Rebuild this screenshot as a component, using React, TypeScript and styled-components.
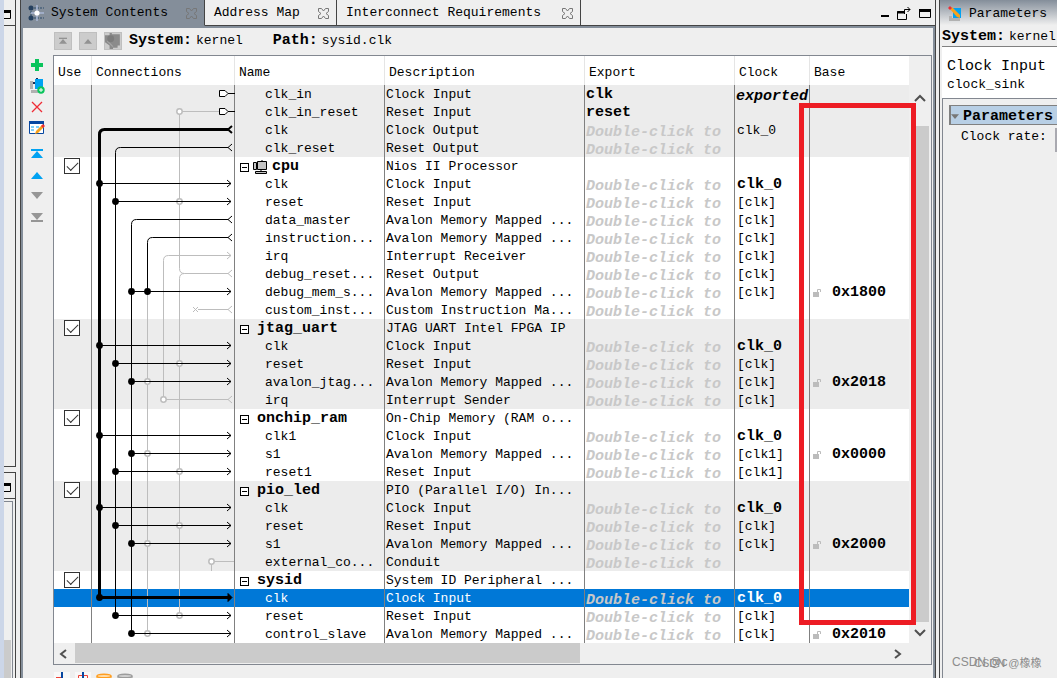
import React from "react";
import styled, { createGlobalStyle } from "styled-components";

const C = {
  panel: "#efefef",
  slate: "#848e9a",
  line: "#444444",
  frame: "#828790",
  band: "#ececec",
  select: "#0078d7",
  thumb: "#cbcbcb",
  faint: "#bdbdbd",
  divider: "#808080",
};
const ROW = 18;

const Global = createGlobalStyle`
  * { box-sizing: border-box; }
  html, body, #root { height: 100%; }
  body {
    margin: 0;
    overflow: hidden;
    background: ${C.panel};
    color: #000;
    font: 13px/18px "Liberation Mono", "Noto Sans CJK SC", monospace;
  }
  button {
    display: inline-flex;
    align-items: center;
    justify-content: center;
    padding: 0;
    border: 0;
    background: none;
    color: inherit;
    font: inherit;
    white-space: pre;
  }
  svg { display: block; flex: none; }
`;

const Workspace = styled.div`
  display: flex;
  height: 100vh;
  overflow: hidden;
`;

/* ---- neighbouring dock, mostly off screen ---- */
const SideDock = styled.aside`
  flex: 0 0 16px;
  min-width: 0;
  overflow: hidden;
  display: flex;
  flex-direction: column;
  gap: 5px;
  border-left: 4px solid #ccd6e8;
`;
const SidePane = styled.section<{ $grow?: boolean }>`
  flex: ${(p) => (p.$grow ? "1 1 0" : "0 0 467px")};
  min-width: 0;
  display: flex;
  flex-direction: column;
  border: solid ${C.line};
  border-width: ${(p) => (p.$grow ? "1px 1px 0 0" : "0 1px 1px 0")};
`;
const SideTitle = styled.div`
  display: flex;
  justify-content: flex-end;
  height: 26px;
  padding: 10px 4px 0 0;
  overflow: hidden;
  border-bottom: 1px solid ${C.line};
`;
const SideScroll = styled.div`
  flex: 1;
  display: flex;
  align-items: flex-end;
  margin: 2px 2px 0 0;
  border: solid ${C.frame};
  border-width: 1px 1px 0 0;
`;
const SideThumb = styled.div`
  width: 7px;
  height: 38px;
  background: ${C.thumb};
`;

/* ---- main dock ---- */
const MainDock = styled.main`
  flex: 1;
  min-width: 0;
  display: flex;
  flex-direction: column;
  margin: 0 3px 0 4px;
  border: solid ${C.line};
  border-width: 0 1px;
`;
const TabBar = styled.header`
  display: flex;
  height: 26px;
  flex: none;
`;
const Tab = styled.div<{ $active?: boolean }>`
  display: flex;
  align-items: center;
  justify-content: space-between;
  padding: 1px 7px 0 9px;
  border-right: 1px solid ${C.line};
  border-bottom: 1px solid ${(p) => (p.$active ? C.slate : C.line)};
  background: ${(p) => (p.$active ? C.slate : C.panel)};
`;
const FirstTab = styled(Tab)`
  width: 184px;
  padding-left: 7px;
`;
const MapTab = styled(Tab)`
  width: 132px;
`;
const RequirementsTab = styled(Tab)`
  width: 244px;
`;
const TabLabel = styled.button`
  gap: 6px;
`;
const WindowTools = styled.div`
  flex: 1;
  display: flex;
  justify-content: flex-end;
  align-items: center;
  gap: 7px;
  padding: 3px 4px 0 0;
  border-bottom: 1px solid ${C.line};
`;
const MainBody = styled.div`
  flex: 1;
  min-height: 0;
  display: flex;
  border: solid ${C.slate};
  border-width: 2px 2px 0;
`;
const SideTools = styled.nav`
  flex: 0 0 30px;
  display: flex;
  flex-direction: column;
  align-items: center;
  padding: 26px 2px 0 0;
`;
const ToolButton = styled.button`
  width: 20px;
  height: 21px;
`;
const ToolGap = styled.hr`
  width: 20px;
  height: 5px;
  margin: 0;
  border: 0;
`;
const Content = styled.div`
  flex: 1;
  min-width: 0;
  display: flex;
  flex-direction: column;
`;
const PathBar = styled.div`
  display: flex;
  align-items: center;
  height: 27px;
  padding: 0 0 2px 1px;
  flex: none;
`;
const NavButton = styled.button`
  width: 18px;
  height: 18px;
  margin-right: 7px;
  border: 1px solid #bfbfbf;
  background: #cccccc;
`;
const Strong = styled.b`
  font-size: 15px;
`;
const PathValue = styled.span`
  margin: 0 30px 0 4px;
`;

const TableFrame = styled.div`
  display: flex;
  flex-direction: column;
  flex: none;
  margin-right: 1px;
  border: 1px solid ${C.frame};
`;
const TableArea = styled.div`
  display: flex;
  position: relative;
`;
const GridHolder = styled.div`
  flex: 1;
  min-width: 0;
  position: relative;
  background: #fff;
`;
const Grid = styled.table`
  width: 100%;
  table-layout: fixed;
  border-collapse: separate;
  border-spacing: 0;
`;
const Head = styled.th`
  height: 29px;
  padding: 4px 4px 0;
  text-align: left;
  font-weight: 400;
  border-right: 1px solid #e5e5e5;
  &:last-child { border-right-color: transparent; }
`;
const Row = styled.tr<{ $band?: boolean; $selected?: boolean }>`
  height: ${ROW}px;
  background: ${(p) => (p.$selected ? C.select : p.$band ? C.band : "#fff")};
  color: ${(p) => (p.$selected ? "#fff" : "#000")};
`;
const Cell = styled.td`
  height: ${ROW}px;
  padding: 0 0 0 1px;
  border-right: 1px solid ${C.divider};
  white-space: pre;
  &:last-child { border-right: 0; }
`;
const CellLine = styled.div<{ $indent?: number; $gap?: number }>`
  display: flex;
  align-items: center;
  gap: ${(p) => p.$gap ?? 0}px;
  height: ${ROW}px;
  padding: 2px 0 0 ${(p) => p.$indent ?? 0}px;
  line-height: 16px;
`;
const Bold = styled.b`
  font-size: 15px;
`;
const Hint = styled.i<{ $dim?: boolean }>`
  display: block;
  height: ${ROW}px;
  padding-top: 4px;
  font-size: 15px;
  line-height: 16px;
  font-weight: 700;
  color: ${(p) => (p.$dim ? "#c8c8c8" : "inherit")};
`;
const Tick = styled.input`
  appearance: none;
  display: block;
  width: 16px;
  height: 16px;
  margin: 0 0 0 9px;
  border: 1px solid #333;
  background: #fff;
  &:checked::after {
    content: "";
    display: block;
    width: 10px;
    height: 5px;
    margin: 3px 0 0 2px;
    border: solid #333;
    border-width: 0 0 1px 1px;
    transform: rotate(-45deg);
  }
`;
const Expander = styled.button`
  width: 9px;
  height: 9px;
  border: 1px solid #000;
  background: #fff;
  &::after {
    content: "";
    width: 5px;
    height: 1px;
    background: #000;
  }
`;
/* The wiring runs across the row backgrounds of the whole Connections column. */
const WiringLayer = styled.svg`
  position: absolute;
  left: 38px;
  bottom: 0;
  pointer-events: none;
`;
const VScroll = styled.div`
  flex: 0 0 22px;
  display: flex;
  flex-direction: column;
  padding: 31px 2px 0 3px;
  background: ${C.panel};
`;
const VThumb = styled.div`
  flex: 1;
  background: ${C.thumb};
`;
const ScrollButton = styled.button`
  width: 16px;
  height: 21px;
`;
const VUpButton = styled(ScrollButton)`
  height: 39px;
  padding-bottom: 18px;
`;
const HScroll = styled.div`
  display: flex;
  align-items: center;
  height: 21px;
  padding: 0 26px 0 2px;
`;
const HTrack = styled.div`
  flex: 1;
  display: flex;
  align-self: stretch;
  padding: 0 0 1px 3px;
`;
const HThumb = styled.div`
  width: 62%;
  background: ${C.thumb};
`;
const Highlight = styled.div`
  position: absolute;
  top: 47px;
  right: 15px;
  bottom: 18px;
  width: 117px;
  border: 5px solid #ed1c24;
  pointer-events: none;
`;
const FilterBar = styled.footer`
  display: flex;
  align-items: flex-start;
  gap: 5px;
  height: 30px;
  padding: 7px 0 0 1px;
  flex: none;
`;

/* ---- parameters dock ---- */
const ParamDock = styled.aside`
  flex: 0 0 118px;
  display: flex;
  flex-direction: column;
  position: relative;
  overflow: hidden;
  white-space: pre;
  border-left: 1px solid ${C.line};
`;
const ParamTitle = styled.h2`
  display: flex;
  align-items: center;
  gap: 7px;
  height: 28px;
  margin: 0;
  padding: 0 0 1px 8px;
  font: inherit;
  background: linear-gradient(${C.slate}, #efefef 90%);
`;
const ParamSystem = styled.div`
  display: flex;
  gap: 4px;
  height: 19px;
  margin-left: 2px;
  border-bottom: 1px solid ${C.divider};
`;
const ParamSummary = styled.div`
  height: 51px;
  margin-left: 2px;
  padding: 11px 0 0 5px;
  background: #fff;
`;
const ParamKind = styled.div`
  font-size: 15px;
`;
const ParamBody = styled.div`
  flex: 1;
  margin-left: 2px;
  padding: 6px 0 0 6px;
  border: solid ${C.frame};
  border-width: 1px 0 0 1px;
`;
const ParamGroup = styled.button`
  display: flex;
  align-items: center;
  justify-content: flex-start;
  gap: 4px;
  width: 100%;
  height: 20px;
  padding-top: 3px;
  border: solid ${C.divider};
  border-width: 1px 0 1px 2px;
  background: #b8cfe5;
`;
const ParamField = styled.div`
  display: flex;
  justify-content: space-between;
  padding: 3px 0 0 12px;
`;
const RateInput = styled.input`
  width: 2px;
  height: 24px;
  padding: 0;
  border: 0;
  background: #a9a9b0;
`;
const Watermark = styled.div`
  position: absolute;
  left: 12px;
  bottom: 7px;
  font: 12px/18px "Liberation Sans", "Noto Sans CJK SC", sans-serif;
  color: #8c8c8c;
`;
const WatermarkEcho = styled.span`
  position: absolute;
  left: 22px;
  top: 1px;
  font-size: 11px;
`;

/* ---- icons ---- */
const CloseIcon = () => (
  <svg width="11" height="11" viewBox="0 0 11 11" fill="none" stroke="#777" strokeWidth="1">
    <path d="M.5 .5H3.5L5.5 3L7.5 .5H10.5V3.5L8 5.5L10.5 7.5V10.5H7.5L5.5 8L3.5 10.5H.5V7.5L3 5.5L.5 3.5Z" />
  </svg>
);
const ContentsIcon = () => (
  <svg width="17" height="17" viewBox="0 0 17 17">
    <path d="M3 3V13M3 3H16M3 13H16" stroke="#2b4a6b" strokeDasharray="2 1" />
    <circle cx="3" cy="3" r="2.5" fill="#25405f" />
    <circle cx="3" cy="13" r="2.5" fill="#25405f" />
    <path d="M9 0V16M3 8H16" stroke="#a9b8d6" strokeWidth="1.5" />
    <circle cx="9" cy="8" r="2.6" fill="#fff" />
  </svg>
);
const MaxIcon = () => (
  <svg width="12" height="10" viewBox="0 0 12 10">
    <path d="M.5 .5H11.5V8.5H.5Z" fill="none" stroke="#000" />
    <path d="M0 0H12V3H0Z" />
  </svg>
);
const MinIcon = () => (
  <svg width="9" height="12" viewBox="0 0 9 12">
    <path d="M0 7H8V9H0Z" />
  </svg>
);
const FloatIcon = () => (
  <svg width="15" height="14" viewBox="0 0 15 14" fill="none" stroke="#000">
    <path d="M7 4.500H.5V12.500H9.500V7" />
    <path d="M0 5.5H7" strokeWidth="2" />
    <path d="M7.500 7V2.500H13M10.500 0L13 2.500L10.500 5" />
  </svg>
);
const Triangle = ({ up, bar, color, size = 12 }: { up?: boolean; bar?: boolean; color: string; size?: number }) => (
  <svg width={size} height={size} viewBox="0 0 12 12" fill={color}>
    <g transform={up ? undefined : "translate(0 12) scale(1 -1)"}>
      <path d="M6 3L12 10H0Z" />
      {bar && <path d="M0 1H12V3H0Z" />}
    </g>
  </svg>
);
const ChipIcon = () => (
  <svg width="16" height="16" viewBox="0 0 14 14" fill="#8b8b8b">
    <path d="M0 2H4V0H6V1H13V11H11V13H7V14H4V11L0 8Z" />
    <path d="M2 7L7 12" stroke="#a5a5a5" />
    <circle cx="5" cy="5" r="3" fill="#7c7c7c" />
  </svg>
);
const PlusIcon = () => (
  <svg width="12" height="12" viewBox="0 0 12 12">
    <path d="M4 0H8V4H12V8H8V12H4V8H0V4H4Z" fill="#0ac45c" />
  </svg>
);
const AddChipIcon = () => (
  <svg width="15" height="16" viewBox="0 0 15 16">
    <path d="M0 3H3V11H0ZM1 12H8V15H1Z" fill="#b1b1b1" />
    <path d="M5 1H13V11H5Z" fill="#00a2f2" />
    <path d="M3 5H5M7 0V1" stroke="#1b2c55" strokeWidth="2" />
    <circle cx="11" cy="12" r="3.700" fill="#0ac45c" />
    <path d="M9 12H13M11 10V14" stroke="#fff" />
  </svg>
);
const DeleteIcon = () => (
  <svg width="12" height="12" viewBox="0 0 12 12">
    <path d="M1 1L11 11M11 1L1 11" stroke="#ef2b35" strokeWidth="1.300" />
  </svg>
);
const EditIcon = () => (
  <svg width="16" height="14" viewBox="0 0 16 14">
    <path d="M.5 .5H14.500V12.500H.5Z" fill="#fff" stroke="#0747a1" />
    <path d="M0 0H15V3H0Z" fill="#0747a1" />
    <path d="M2 6H5M2 9H5M7 6H10" stroke="#00a2f2" />
    <path d="M6 13L7 10L13 4L15 6L9 12Z" fill="#f7a11b" />
    <path d="M12 5L14 3L16 5L14 7Z" fill="#ed2d35" />
  </svg>
);
const CpuIcon = () => (
  <svg width="15" height="14" viewBox="0 0 15 14" fill="#c4c4c4" stroke="#000">
    <path d="M.5 2.500H3.500V9.500H.5ZM4.500 1.500H13.500V9.500H4.500ZM2.500 11.500H13.500V13.500H2.500Z" />
    <path d="M9 0V1M3 6H5M8 9V12" />
  </svg>
);
const LockIcon = () => (
  <svg width="9" height="9" viewBox="0 0 9 9">
    <path d="M0 3H6V8H0Z" fill="#bcbcbc" />
    <path d="M4.500 3V.5H7.500V3" fill="none" stroke="#bcbcbc" />
  </svg>
);
const ParamIcon = () => (
  <svg width="14" height="16" viewBox="0 0 14 16">
    <path d="M1 10H4V12H12V15H1Z" fill="#b1b1b1" />
    <path d="M5 2H13V12H5Z" fill="#00a2f2" />
    <path d="M2 3L4 1L12 9V12L9 11Z" fill="#f7a11b" />
    <path d="M0 2L2 0L4 2L2 4Z" fill="#ed2d35" />
  </svg>
);
const Chevron = ({ d }: { d: string }) => (
  <svg width="12" height="12" viewBox="0 0 12 12" fill="none" stroke="#505050" strokeWidth="2">
    <path d={d} />
  </svg>
);
const SplitIcon = ({ red }: { red: string }) => (
  <svg width="16" height="16" viewBox="0 0 16 16" fill="none">
    <path d="M0 0H16V16H0Z" fill="#f8f8f8" />
    <path d={red} stroke="#ef4136" />
    <path d="M8 0V16" stroke="#0747a1" strokeWidth="2" />
  </svg>
);
const DiskIcon = ({ color, fill }: { color: string; fill: string }) => (
  <svg width="16" height="14" viewBox="0 0 16 14">
    <path d="M1 4V11Q8 15 15 11V4" fill={fill} stroke={color} />
    <ellipse cx="8" cy="4" rx="7" ry="1.800" fill={fill} stroke={color} strokeWidth="1.500" />
  </svg>
);

/* ---- data ---- */
type Port = {
  name: string;
  desc: string;
  exp?: string;
  clock?: string;
  boldClock?: boolean;
  base?: string;
  selected?: boolean;
};
type Module = { name?: string; desc?: string; cpu?: boolean; band?: boolean; ports: Port[] };

const HINT = "Double-click to";
const AVALON = "Avalon Memory Mapped ...";
const clk = (name = "clk", selected = false): Port => ({ name, desc: "Clock Input", exp: HINT, clock: "clk_0", boldClock: true, selected });
const rst = (name = "reset", clock = "[clk]"): Port => ({ name, desc: "Reset Input", exp: HINT, clock });
const mem = (name: string, base?: string, clock = "[clk]"): Port => ({ name, desc: AVALON, exp: HINT, clock, base });

const modules: Module[] = [
  {
    band: true,
    ports: [
      { name: "clk_in", desc: "Clock Input", exp: "clk", clock: "exported" },
      { name: "clk_in_reset", desc: "Reset Input", exp: "reset" },
      { name: "clk", desc: "Clock Output", exp: HINT, clock: "clk_0" },
      { name: "clk_reset", desc: "Reset Output", exp: HINT },
    ],
  },
  {
    name: "cpu",
    desc: "Nios II Processor",
    cpu: true,
    ports: [
      clk(),
      rst(),
      mem("data_master"),
      mem("instruction..."),
      { name: "irq", desc: "Interrupt Receiver", exp: HINT, clock: "[clk]" },
      { name: "debug_reset...", desc: "Reset Output", exp: HINT, clock: "[clk]" },
      mem("debug_mem_s...", "0x1800"),
      { name: "custom_inst...", desc: "Custom Instruction Ma...", exp: HINT },
    ],
  },
  {
    name: "jtag_uart",
    desc: "JTAG UART Intel FPGA IP",
    band: true,
    ports: [
      clk(),
      rst(),
      mem("avalon_jtag...", "0x2018"),
      { name: "irq", desc: "Interrupt Sender", exp: HINT, clock: "[clk]" },
    ],
  },
  {
    name: "onchip_ram",
    desc: "On-Chip Memory (RAM o...",
    ports: [clk("clk1"), mem("s1", "0x0000", "[clk1]"), rst("reset1", "[clk1]")],
  },
  {
    name: "pio_led",
    desc: "PIO (Parallel I/O) In...",
    band: true,
    ports: [clk(), rst(), mem("s1", "0x2000"), { name: "external_co...", desc: "Conduit", exp: HINT }],
  },
  {
    name: "sysid",
    desc: "System ID Peripheral ...",
    ports: [clk("clk", true), rst(), mem("control_slave", "0x2010")],
  },
];

/* ---- wiring ---- */
const END = 139;
const TOTAL = 31;
const yOf = (row: number) => row * ROW + 8.5;
const trunk = { clk: 7.5, reset: 23.5, data: 39.5, instr: 55.5, irq: 71.5, sysReset: 87.5, conduit: 119.5 };
const source = (x: number, from: number, to: number) =>
  `M${END - 3} ${yOf(from)}H${x + 5}Q${x} ${yOf(from)} ${x} ${yOf(from) + 5}V${yOf(to)}`;
const tail = (row: number) => `M${END + 1} ${yOf(row) - 3.5}L${END - 3} ${yOf(row)}L${END + 1} ${yOf(row) + 3.5}`;
const arrow = (x: number, row: number) =>
  `M${x} ${yOf(row)}H${END}M${END - 4} ${yOf(row) - 3.5}L${END} ${yOf(row)}L${END - 4} ${yOf(row) + 3.5}`;

const arrows: [number, number][] = [
  [trunk.clk, 5], [trunk.reset, 6], [trunk.data, 11], [trunk.clk, 14], [trunk.reset, 15], [trunk.data, 16],
  [trunk.clk, 19], [trunk.data, 20], [trunk.reset, 21], [trunk.clk, 23], [trunk.reset, 24], [trunk.data, 25],
  [trunk.reset, 29], [trunk.data, 30],
];
const dots: [number, number][] = [...arrows, [trunk.instr, 11], [trunk.clk, 28]];
const openOnWire: [number, number][] = [
  [trunk.sysReset, 6], [trunk.sysReset, 15], [trunk.instr, 16], [trunk.instr, 20], [trunk.sysReset, 21],
  [trunk.sysReset, 24], [trunk.instr, 25], [trunk.sysReset, 29], [trunk.instr, 30],
];
const openEnds: [number, number][] = [[trunk.sysReset, 1], [trunk.irq, 17], [trunk.conduit, 26]];

const Wiring = () => (
  <WiringLayer width="143" height={TOTAL * ROW} viewBox={`0 0 143 ${TOTAL * ROW}`} fill="none" stroke="#000" aria-hidden="true">
    <g stroke={C.faint}>
      <path d={`M${trunk.sysReset} ${yOf(1)}V${yOf(10) - 5}Q${trunk.sysReset} ${yOf(10)} ${trunk.sysReset + 5} ${yOf(10)}`} />
      <path d={`M${trunk.sysReset} ${yOf(1)}H127`} />
      <path d={source(trunk.sysReset, 10, 29) + tail(10)} />
      <path d={source(trunk.irq, 9, 17)} />
      <path d={arrow(END - 4, 9)} />
      <path d={`M${trunk.irq} ${yOf(17)}H${END - 3}` + tail(17)} />
      <path d={`M${trunk.instr} ${yOf(11)}V${yOf(30)}`} />
      <path d={`M106 ${yOf(12)}H${END - 3}` + tail(12)} />
      <path d={`M101 ${yOf(12) - 2.5}l5 5m0 -5l-5 5`} />
      <path d={`M142 ${yOf(26)}H${trunk.conduit}V${27 * ROW}`} />
    </g>
    {openOnWire.map(([x, r]) => (
      <circle key={`w${x}-${r}`} cx={x} cy={yOf(r)} r="2.7" stroke={C.faint} strokeWidth="1.5" fill="#fff" />
    ))}
    <path d={source(trunk.reset, 3, 29) + tail(3)} />
    <path d={source(trunk.data, 7, 30) + tail(7)} />
    <path d={source(trunk.instr, 8, 11) + tail(8)} />
    {arrows.map(([x, r]) => (
      <path key={`a${x}-${r}`} d={arrow(x, r)} />
    ))}
    <path strokeWidth="3" d={source(trunk.clk, 2, 28)} />
    <path strokeWidth="2" d={tail(2)} />
    <path strokeWidth="3" d={`M${trunk.clk} ${yOf(28)}H${END}`} />
    <path fill="#000" d={`M${END - 3} ${yOf(28) - 4}L${END + 1} ${yOf(28)}L${END - 3} ${yOf(28) + 4}Z`} />
    {openEnds.map(([x, r]) => (
      <circle key={`o${x}-${r}`} cx={x} cy={yOf(r)} r="2.7" stroke={C.faint} strokeWidth="1.5" fill="#fff" />
    ))}
    {dots.map(([x, r]) => (
      <circle key={`d${x}-${r}`} cx={x} cy={yOf(r)} r="3.4" fill="#000" stroke="none" />
    ))}
    {[0, 1].map((r) => (
      <path key={`p${r}`} fill="#fff" d={`M127.5 ${yOf(r) - 3}H133L136 ${yOf(r)}L133 ${yOf(r) + 3}H127.5ZM136 ${yOf(r)}H143`} />
    ))}
  </WiringLayer>
);

const PortRow = ({ port, band }: { port: Port; band?: boolean }) => (
  <Row $band={band} $selected={port.selected}>
    <Cell />
    <Cell />
    <Cell><CellLine $indent={29}>{port.name}</CellLine></Cell>
    <Cell><CellLine>{port.desc}</CellLine></Cell>
    <Cell>
      {port.exp === HINT ? <Hint $dim>{HINT}</Hint> : <CellLine><Bold>{port.exp}</Bold></CellLine>}
    </Cell>
    <Cell>
      {port.clock === "exported" ? (
        <Hint>exported</Hint>
      ) : (
        <CellLine $indent={1}>{port.boldClock ? <Bold>{port.clock}</Bold> : port.clock}</CellLine>
      )}
    </Cell>
    <Cell>
      {port.base && (
        <CellLine $indent={2} $gap={10}>
          <LockIcon />
          <Bold>{port.base}</Bold>
        </CellLine>
      )}
    </Cell>
  </Row>
);

const ModuleRow = ({ module }: { module: Module }) => (
  <Row $band={module.band}>
    <Cell><Tick type="checkbox" defaultChecked aria-label={`Use ${module.name}`} /></Cell>
    <Cell />
    <Cell>
      <CellLine $indent={4} $gap={module.cpu ? 4 : 8}>
        <Expander aria-label={`Collapse ${module.name}`} />
        {module.cpu && <CpuIcon />}
        <Bold>{module.name}</Bold>
      </CellLine>
    </Cell>
    <Cell><CellLine>{module.desc}</CellLine></Cell>
    <Cell />
    <Cell />
    <Cell />
  </Row>
);

export default function App() {
  return (
    <>
      <Global />
      <Workspace>
        <SideDock>
          <SidePane>
            <SideTitle><MaxIcon /></SideTitle>
          </SidePane>
          <SidePane $grow>
            <SideTitle><MaxIcon /></SideTitle>
            <SideScroll><SideThumb /></SideScroll>
          </SidePane>
        </SideDock>

        <MainDock>
          <TabBar>
            <FirstTab $active>
              <TabLabel><ContentsIcon />System Contents</TabLabel>
              <button aria-label="Close System Contents"><CloseIcon /></button>
            </FirstTab>
            <MapTab>
              <TabLabel>Address Map</TabLabel>
              <button aria-label="Close Address Map"><CloseIcon /></button>
            </MapTab>
            <RequirementsTab>
              <TabLabel>Interconnect Requirements</TabLabel>
              <button aria-label="Close Interconnect Requirements"><CloseIcon /></button>
            </RequirementsTab>
            <WindowTools>
              <button aria-label="Minimize"><MinIcon /></button>
              <button aria-label="Float"><FloatIcon /></button>
              <button aria-label="Maximize"><MaxIcon /></button>
            </WindowTools>
          </TabBar>

          <MainBody>
            <SideTools>
              <ToolButton aria-label="Add"><PlusIcon /></ToolButton>
              <ToolButton aria-label="Add component"><AddChipIcon /></ToolButton>
              <ToolButton aria-label="Remove"><DeleteIcon /></ToolButton>
              <ToolButton aria-label="Edit"><EditIcon /></ToolButton>
              <ToolGap />
              <ToolButton aria-label="Move to top"><Triangle up bar color="#00a2f2" /></ToolButton>
              <ToolButton aria-label="Move up"><Triangle up color="#00a2f2" /></ToolButton>
              <ToolButton aria-label="Move down"><Triangle color="#969696" /></ToolButton>
              <ToolButton aria-label="Move to bottom"><Triangle bar color="#969696" /></ToolButton>
            </SideTools>

            <Content>
              <PathBar>
                <NavButton aria-label="Top level"><Triangle up bar color="#929292" size={8} /></NavButton>
                <NavButton aria-label="Up one level"><Triangle up color="#929292" size={8} /></NavButton>
                <NavButton aria-label="Drill into"><ChipIcon /></NavButton>
                <Strong>System:</Strong>
                <PathValue>kernel</PathValue>
                <Strong>Path:</Strong>
                <PathValue>sysid.clk</PathValue>
              </PathBar>

              <TableFrame>
                <TableArea>
                  <GridHolder>
                    <Grid>
                      <colgroup>
                        <col width="38" />
                        <col width="143" />
                        <col width="150" />
                        <col width="200" />
                        <col width="150" />
                        <col width="75" />
                        <col />
                      </colgroup>
                      <thead>
                        <tr>
                          {["Use", "Connections", "Name", "Description", "Export", "Clock", "Base"].map((h) => (
                            <Head key={h} scope="col">{h}</Head>
                          ))}
                        </tr>
                      </thead>
                      <tbody>
                        {modules.map((m, i) => (
                          <React.Fragment key={i}>
                            {m.name && <ModuleRow module={m} />}
                            {m.ports.map((p) => (
                              <PortRow key={p.name} port={p} band={m.band} />
                            ))}
                          </React.Fragment>
                        ))}
                      </tbody>
                    </Grid>
                    <Wiring />
                  </GridHolder>
                  <VScroll>
                    <VUpButton aria-label="Scroll up"><Chevron d="M1 9L6 4L11 9" /></VUpButton>
                    <VThumb />
                    <ScrollButton aria-label="Scroll down"><Chevron d="M1 3L6 8L11 3" /></ScrollButton>
                  </VScroll>
                  <Highlight />
                </TableArea>
                <HScroll>
                  <ScrollButton aria-label="Scroll left"><Chevron d="M8 2L3 6L8 10" /></ScrollButton>
                  <HTrack><HThumb /></HTrack>
                  <ScrollButton aria-label="Scroll right"><Chevron d="M4 2L9 6L4 10" /></ScrollButton>
                </HScroll>
              </TableFrame>

              <FilterBar>
                <button aria-label="Split side"><SplitIcon red="M2 5.5H8M5 6V12" /></button>
                <button aria-label="Split middle"><SplitIcon red="M3.5 3.5H12.5V12.5H3.500Z" /></button>
                <button aria-label="Filter"><DiskIcon color="#ff9d1f" fill="#ffdca8" /></button>
                <button aria-label="Clear filter"><DiskIcon color="#9c9c9c" fill="#d0d0d0" /></button>
              </FilterBar>
            </Content>
          </MainBody>
        </MainDock>

        <ParamDock>
          <ParamTitle><ParamIcon />Parameters</ParamTitle>
          <ParamSystem><Strong>System:</Strong>kernel</ParamSystem>
          <ParamSummary>
            <ParamKind>Clock Input</ParamKind>
            clock_sink
          </ParamSummary>
          <ParamBody>
            <ParamGroup>
              <Triangle color="#777" size={8} />
              <Strong>Parameters</Strong>
            </ParamGroup>
            <ParamField>
              <label htmlFor="rate">Clock rate:</label>
              <RateInput id="rate" />
            </ParamField>
          </ParamBody>
          <Watermark>
            CSDN @c
            <WatermarkEcho>CSDN @橡橡</WatermarkEcho>
          </Watermark>
        </ParamDock>
      </Workspace>
    </>
  );
}
